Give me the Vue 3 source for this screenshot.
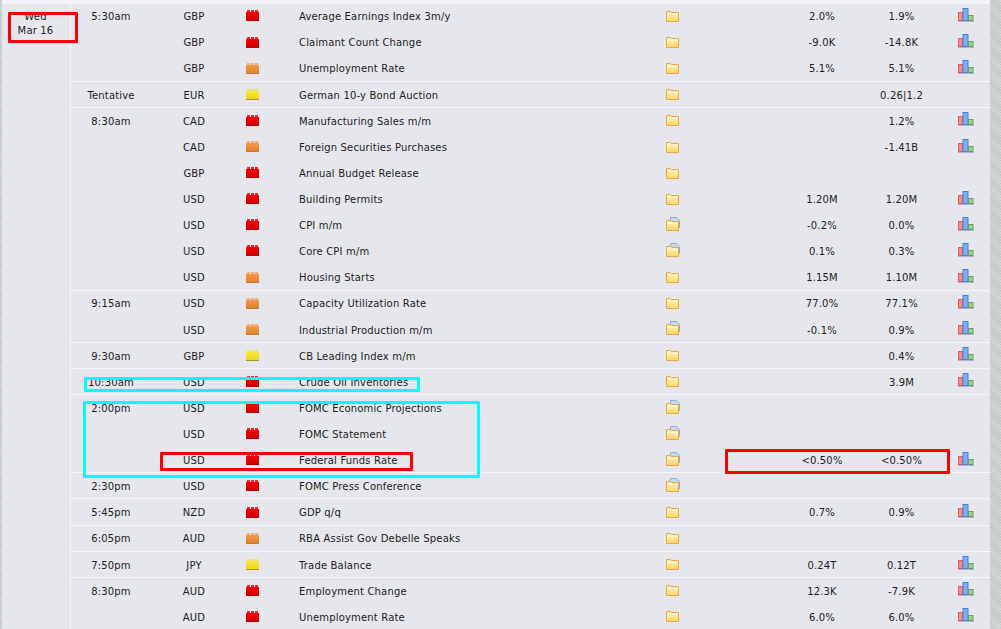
<script setup>
const rows = [
  { t: '5:30am', c: 'GBP', i: 'r', e: 'Average Earnings Index 3m/y', f: 0, a: '2.0%', p: '1.9%', g: 1 },
  { c: 'GBP', i: 'r', e: 'Claimant Count Change', f: 0, a: '-9.0K', p: '-14.8K', g: 1 },
  { c: 'GBP', i: 'o', e: 'Unemployment Rate', f: 0, a: '5.1%', p: '5.1%', g: 1, end: 1 },
  { t: 'Tentative', c: 'EUR', i: 'y', e: 'German 10-y Bond Auction', f: 0, p: '0.26|1.2', end: 1 },
  { t: '8:30am', c: 'CAD', i: 'r', e: 'Manufacturing Sales m/m', f: 0, p: '1.2%', g: 1 },
  { c: 'CAD', i: 'o', e: 'Foreign Securities Purchases', f: 0, p: '-1.41B', g: 1 },
  { c: 'GBP', i: 'r', e: 'Annual Budget Release', f: 0 },
  { c: 'USD', i: 'r', e: 'Building Permits', f: 0, a: '1.20M', p: '1.20M', g: 1 },
  { c: 'USD', i: 'r', e: 'CPI m/m', f: 1, a: '-0.2%', p: '0.0%', g: 1 },
  { c: 'USD', i: 'r', e: 'Core CPI m/m', f: 1, a: '0.1%', p: '0.3%', g: 1 },
  { c: 'USD', i: 'o', e: 'Housing Starts', f: 0, a: '1.15M', p: '1.10M', g: 1, end: 1 },
  { t: '9:15am', c: 'USD', i: 'o', e: 'Capacity Utilization Rate', f: 0, a: '77.0%', p: '77.1%', g: 1 },
  { c: 'USD', i: 'o', e: 'Industrial Production m/m', f: 1, a: '-0.1%', p: '0.9%', g: 1, end: 1 },
  { t: '9:30am', c: 'GBP', i: 'y', e: 'CB Leading Index m/m', f: 0, p: '0.4%', g: 1, end: 1 },
  { t: '10:30am', c: 'USD', i: 'r', e: 'Crude Oil Inventories', f: 0, p: '3.9M', g: 1, end: 1 },
  { t: '2:00pm', c: 'USD', i: 'r', e: 'FOMC Economic Projections', f: 1 },
  { c: 'USD', i: 'r', e: 'FOMC Statement', f: 1 },
  { c: 'USD', i: 'r', e: 'Federal Funds Rate', f: 1, a: '<0.50%', p: '<0.50%', g: 1, end: 1 },
  { t: '2:30pm', c: 'USD', i: 'r', e: 'FOMC Press Conference', f: 1, end: 1 },
  { t: '5:45pm', c: 'NZD', i: 'r', e: 'GDP q/q', f: 0, a: '0.7%', p: '0.9%', g: 1, end: 1 },
  { t: '6:05pm', c: 'AUD', i: 'o', e: 'RBA Assist Gov Debelle Speaks', f: 0, end: 1 },
  { t: '7:50pm', c: 'JPY', i: 'y', e: 'Trade Balance', f: 0, a: '0.24T', p: '0.12T', g: 1, end: 1 },
  { t: '8:30pm', c: 'AUD', i: 'r', e: 'Employment Change', f: 0, a: '12.3K', p: '-7.9K', g: 1 },
  { c: 'AUD', i: 'r', e: 'Unemployment Rate', f: 0, a: '6.0%', p: '6.0%', g: 1 },
]
const impact = { r: 'url(#gr)', o: 'url(#go)', y: 'url(#gy)' }
const edge = { r: '#c00000', o: '#c8772a', y: '#a89a10' }
const bump = { r: '#ec2c2c', o: '#f2ac70', y: '#efe060' }
</script>

<template>
  <div class="page">
    <svg class="defs" width="0" height="0" aria-hidden="true">
      <defs>
        <linearGradient id="gr" x1="0" y1="0" x2="0" y2="1"><stop offset="0" stop-color="#f80000" /><stop offset="1" stop-color="#c80000" /></linearGradient>
        <linearGradient id="go" x1="0" y1="0" x2="0" y2="1"><stop offset="0" stop-color="#f79a48" /><stop offset="1" stop-color="#dc7e2c" /></linearGradient>
        <linearGradient id="gy" x1="0" y1="0" x2="0" y2="1"><stop offset="0" stop-color="#fbe93a" /><stop offset="1" stop-color="#eed41a" /></linearGradient>
        <linearGradient id="gf" x1="0" y1="0" x2="0" y2="1"><stop offset="0" stop-color="#fff3c0" /><stop offset="1" stop-color="#fbd768" /></linearGradient>
      </defs>
    </svg>

    <div class="hatch-left"></div>
    <div class="main">
      <div class="strip"></div>
      <div class="body">
        <div class="date"><span>Wed</span><span>Mar 16</span></div>
        <div class="rows">
          <div v-for="(r, n) in rows" :key="n" class="row" :class="{ end: r.end }">
            <div class="time">{{ r.t }}</div>
            <div class="cur">{{ r.c }}</div>
            <div class="imp">
              <svg width="13" height="12" viewBox="0 0 13 12">
                <path d="M1 1H4M5 1H8M9 1H12" :stroke="bump[r.i]" stroke-width="2" />
                <rect x="0" y="2" width="13" height="9" :fill="impact[r.i]" />
                <path d="M0 10.5H13" :stroke="edge[r.i]" />
              </svg>
            </div>
            <div class="ev">{{ r.e }}</div>
            <div class="fold">
              <svg width="16" height="15" viewBox="0 1 16 15">
                <g v-if="r.f">
                  <path d="M6.5 0.5H12.5L15.5 3.5V10.5H6.5Z" fill="#c4d8f4" stroke="#8db0e0" />
                </g>
                <path d="M2.5 3.5H6.5L7.5 4.5H14.5V13.5H2.5Z" fill="url(#gf)" stroke="#eda548" />
                <path d="M3 6.5H14" stroke="#fff8dc" />
              </svg>
            </div>
            <div class="spacer"></div>
            <div class="val">{{ r.a }}</div>
            <div class="val">{{ r.p }}</div>
            <div class="chart">
              <svg v-if="r.g" width="16" height="15" viewBox="0 1 16 15">
                <rect x="0.5" y="4.5" width="4" height="8" fill="#f58a8a" stroke="#e85a5a" />
                <rect x="5" y="0.5" width="5" height="12" fill="#7fb0ee" stroke="#4a80dc" />
                <rect x="10.5" y="7.5" width="4.5" height="5" fill="#9ccf94" stroke="#68a064" />
                <path d="M0 13.5H16" stroke="#b0b0c8" />
              </svg>
            </div>
          </div>
        </div>
      </div>
    </div>
    <div class="hatch-right"></div>

    <div class="mark red" style="left:8px;top:12px;width:70px;height:31px"></div>
    <div class="mark cyan" style="left:84px;top:377px;width:336px;height:15px"></div>
    <div class="mark cyan" style="left:83px;top:401px;width:397px;height:77px"></div>
    <div class="mark red" style="left:160px;top:452px;width:253px;height:19px"></div>
    <div class="mark red" style="left:725px;top:449px;width:225px;height:25px"></div>
  </div>
</template>

<style>
html, body { margin: 0; overflow: hidden; }
</style>

<style scoped>
.page {
  position: relative;
  display: flex;
  width: 1001px;
  height: 629px;
  overflow: hidden;
  background: #e6e7ec;
  color: #1c1c1c;
  font: 10px/14px "DejaVu Sans", Verdana, sans-serif;
  letter-spacing: 0.17px;
}
.defs { position: absolute; }
.hatch-left, .hatch-right {
  flex: none;
  background: repeating-linear-gradient(45deg, #c2c7c7 0 1px, #d4d7d7 1px 2px);
}
.hatch-left { width: 2px; }
.hatch-right { width: 11px; }
.main { flex: 1; min-width: 0; display: flex; flex-direction: column; }
.strip { flex: none; height: 4px; background: #f3f4f8; }
.body { flex: 1; display: flex; min-height: 0; margin-top: -0.6px; }
.date {
  flex: none;
  box-sizing: border-box;
  width: 69px;
  border-right: 1px solid #f6f7fa;
  margin-top: 0.6px;
  padding: 6px 1px 0 0;
  display: flex;
  flex-direction: column;
  align-items: center;
}
.rows { flex: 1; min-width: 0; }
.row {
  box-sizing: border-box;
  height: 26.12px;
  display: grid;
  grid-template-columns: 80px 86px 30px 373px 64px 78px 80px 79px 1fr;
  align-items: center;
}
.row.end { box-shadow: inset 0 -1px 0 #f6f7fa; }
.time, .cur, .val { text-align: center; padding-top: 1.6px; }
.ev { padding: 1.6px 0 0 32px; white-space: nowrap; }
.imp, .fold, .chart { display: flex; justify-content: center; }
.fold svg, .chart svg { overflow: visible; }
.mark { position: absolute; box-sizing: border-box; border: 3px solid; border-radius: 1px; }
.red { border-color: #f00; }
.cyan { border-color: #0ff; }
</style>
